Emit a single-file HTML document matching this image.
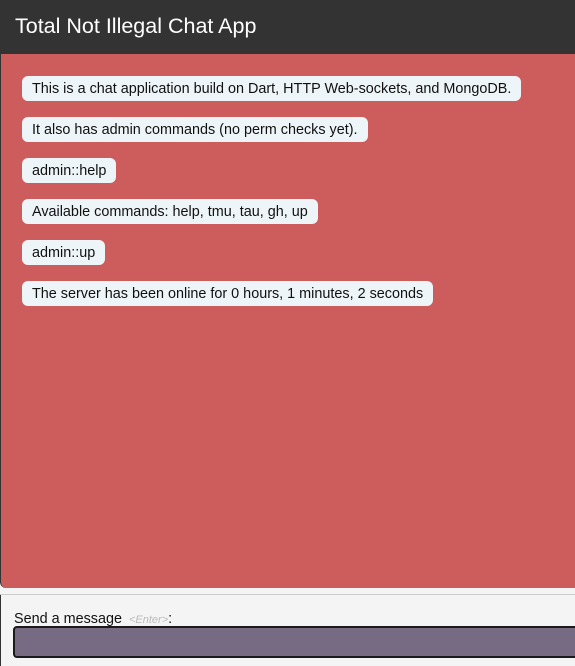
<!DOCTYPE html>
<html><head><style>
body{margin:0;width:575px;height:666px;overflow:hidden;background:#f4f4f4;font-family:"Liberation Sans",Arial,sans-serif;position:relative}
.hdr{position:absolute;left:0;top:0;width:575px;height:54px;background:#333;color:#fff;font-size:21.5px;line-height:52px;padding-left:15px;box-sizing:border-box}
.chat{position:absolute;left:0;top:54px;width:580px;height:534px;background:#cd5c5c;border-left:1px solid #333;box-sizing:border-box;border-bottom-left-radius:6px}
.b{position:absolute;left:21px;height:25px;line-height:27px;padding:0 10px;background:#eef5f8;border-radius:6px;font-size:14.4px;color:#111;white-space:nowrap}
.sep{position:absolute;left:0;top:594px;width:575px;height:1px;background:#ccc}
.lbl{position:absolute;left:14px;top:611px;font-size:14.4px;color:#111}
.lbl i{font-size:11px;color:#bbb;margin-left:3px}
.inp{position:absolute;left:13px;top:626px;width:580px;height:32px;background:#776b84;border:2px solid #1a1a1a;border-radius:4px;box-sizing:border-box}
.lb{position:absolute;left:0;top:595px;width:1px;height:71px;background:#333}
</style></head><body>
<div class="hdr">Total Not Illegal Chat App</div>
<div class="chat">
<div class="b" style="top:22px">This is a chat application build on Dart, HTTP Web-sockets, and MongoDB.</div>
<div class="b" style="top:63px">It also has admin commands (no perm checks yet).</div>
<div class="b" style="top:104px">admin::help</div>
<div class="b" style="top:145px">Available commands: help, tmu, tau, gh, up</div>
<div class="b" style="top:186px">admin::up</div>
<div class="b" style="top:227px">The server has been online for 0 hours, 1 minutes, 2 seconds</div>
</div>
<div class="sep"></div>
<div class="lb"></div>
<div class="lbl">Send a message <i>&lt;Enter&gt;</i>:</div>
<div class="inp"></div>
</body></html>
